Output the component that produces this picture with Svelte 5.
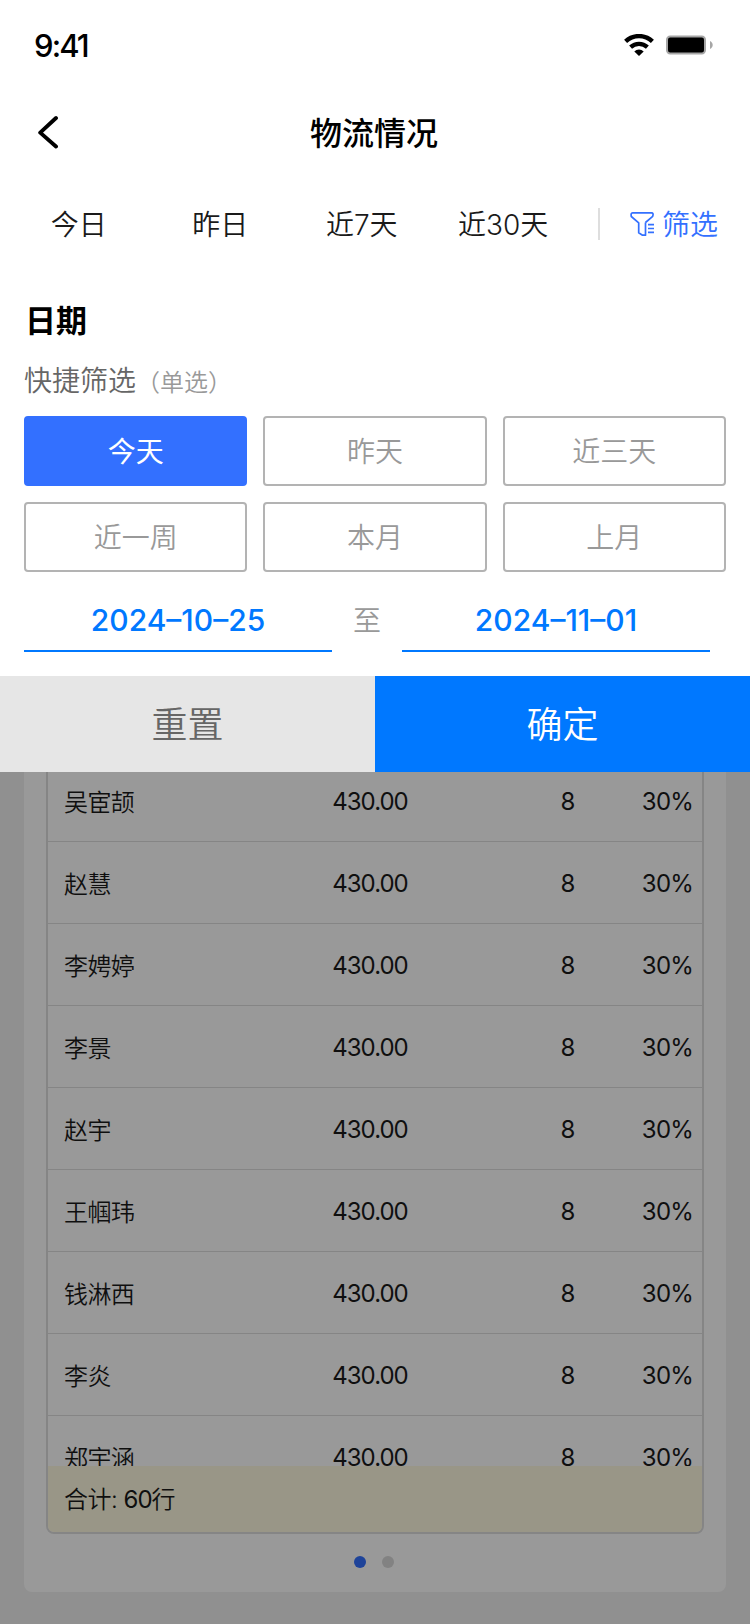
<script lang="ts">
  interface Row {
    name: string;
    amount: string;
    count: number;
    rate: string;
  }

  const tabs = ['今日', '昨日', '近7天', '近30天'];
  const ranges = ['今天', '昨天', '近三天', '近一周', '本月', '上月'];
  const names = ['吴宦颉', '赵慧', '李娉婷', '李景', '赵宇', '王帼玮', '钱淋西', '李炎', '郑宇涵'];
  const rows: Row[] = names.map((name) => ({ name, amount: '430.00', count: 8, rate: '30%' }));

  let selected = $state('今天');
  let start = $state('2024–10–25');
  let end = $state('2024–11–01');

  function reset() {
    selected = '今天';
  }
</script>

<div class="page">
  <main class="content">
    <section class="card">
      <div class="table">
        <div class="rows">
          {#each rows as row}
            <div class="row">
              <span class="name">{row.name}</span>
              <span class="amount">{row.amount}</span>
              <span class="count">{row.count}</span>
              <span class="rate">{row.rate}</span>
            </div>
          {/each}
        </div>
        <div class="total">合计: <span class="num">60</span>行</div>
      </div>
      <div class="dots">
        <i class="dot on"></i>
        <i class="dot"></i>
      </div>
    </section>
  </main>

  <div class="mask"></div>

  <div class="sheet">
    <div class="status">
      <span class="time">9:41</span>
      <span class="signals">
        <svg width="30" height="22" viewBox="0 0 30 22">
          <path d="M1.6 7.4a19.5 19.5 0 0 1 26.8 0" fill="none" stroke="#000" stroke-width="4.4" />
          <path d="M6.6 13.1a12.3 12.3 0 0 1 16.8 0" fill="none" stroke="#000" stroke-width="4.2" />
          <path d="M15 22l-4.7-4.6a6.9 6.9 0 0 1 9.4 0z" />
        </svg>
        <svg width="48" height="20" viewBox="0 0 48 20">
          <rect x="1" y="1.5" width="38" height="17" rx="3.2" fill="#000" stroke="#a6a6a6" stroke-width="2" />
          <path d="M44 6c3.6 1.4 3.6 6.6 0 8z" fill="#a6a6a6" />
        </svg>
      </span>
    </div>

    <header class="nav">
      <button class="back" aria-label="返回">
        <svg width="22" height="34" viewBox="0 0 22 34">
          <path d="M18 3L2.200 17.600l15.800 13.900" fill="none" stroke="#000" stroke-width="3.900" stroke-linecap="round" stroke-linejoin="round" />
        </svg>
      </button>
      <h1>物流情况</h1>
    </header>

    <nav class="tabs">
      {#each tabs as tab}
        <button class="tab">{tab}</button>
      {/each}
      <span class="divider"></span>
      <button class="filter">
        <svg width="24" height="26" viewBox="0 0 24 26" fill="none" stroke="#3370ff" stroke-width="1.7" stroke-linejoin="round">
          <path d="M15.5 11.5V24.200H12.500L8.700 21.800V11.800L1.300 5.500Q.6 1.800 2.500 1.800H21.500Q23.900 1.800 22.700 5.300L15.500 11.500" />
          <path d="M18 13.700h6M18 17.500h6M18 21.300h6" />
        </svg>
        <span class="filter-text">筛选</span>
      </button>
    </nav>

    <section class="panel">
      <h2>日期</h2>
      <p class="hint">快捷筛选<small>（单选）</small></p>
      <div class="ranges">
        {#each ranges as range}
          <button class="range" class:active={range === selected} onclick={() => (selected = range)}>{range}</button>
        {/each}
      </div>
      <div class="dates">
        <span class="date">{start}</span>
        <span class="to">至</span>
        <span class="date">{end}</span>
      </div>
    </section>

    <footer class="actions">
      <button class="reset" onclick={reset}>重置</button>
      <button class="confirm">确定</button>
    </footer>
  </div>
</div>

<style>
  :global(body) {
    margin: 0;
  }

  .page {
    position: relative;
    width: 750px;
    height: 1624px;
    overflow: hidden;
    background: #f0f0f0;
    color: #1a1a1a;
    font-family: Inter, 'Noto Sans CJK SC', sans-serif;
    font-weight: 350;
  }
  .page * { box-sizing: border-box; }

  button {
    padding: 0;
    border: 0;
    background: none;
    color: inherit;
    font: inherit;
    cursor: pointer;
  }
  svg { display: block; flex-shrink: 0; }
  h1, h2, p { margin: 0; }

  /* Report underneath the filter sheet */
  .content {
    height: 100%;
    padding: 270px 24px 32px;
    box-sizing: border-box;
  }
  .card {
    display: flex;
    flex-direction: column;
    height: 100%;
    padding: 0 22px 24px;
    border-radius: 8px;
    background: #fff;
  }
  .table {
    display: flex;
    flex-direction: column;
    flex: 1;
    min-height: 0;
    border: 2px solid #dedede;
    border-radius: 8px;
    overflow: hidden;
  }
  .rows {
    flex: 1;
    min-height: 0;
    padding-top: 488px;
    overflow: hidden;
  }
  .row {
    display: flex;
    align-items: center;
    height: 82px;
    padding: 0 9px 0 16px;
    border-bottom: 1px solid #dedede;
    font-size: 24px;
  }
  .name { width: 226px; padding-bottom: 1px; letter-spacing: -0.6px; }
  .amount, .count, .rate { padding-top: 2px; font-weight: 400; }
  .amount { width: 160px; text-align: center; letter-spacing: -1px; }
  .count { width: 136px; padding-left: 100px; text-align: center; }
  .rate { flex: 1; text-align: right; letter-spacing: -0.8px; }
  .total {
    height: 66px;
    padding: 1px 0 0 16px;
    background: #fffae1;
    font-size: 24px;
    line-height: 66px;
    letter-spacing: -0.5px;
  }
  .num { font-weight: 400; letter-spacing: -1px; }
  .dots {
    display: flex;
    justify-content: center;
    gap: 16px;
    padding: 22px 2px 0 0;
  }
  .dot {
    width: 12px;
    height: 12px;
    border-radius: 50%;
    background: #d9d9d9;
  }
  .dot.on { background: #3370ff; }

  .mask {
    position: absolute;
    inset: 0;
    background: rgba(0, 0, 0, 0.4);
  }

  /* Filter sheet */
  .sheet {
    position: absolute;
    top: 0;
    left: 0;
    width: 100%;
    height: 772px;
    display: flex;
    flex-direction: column;
    background: #fff;
  }
  .status {
    display: flex;
    align-items: center;
    justify-content: space-between;
    height: 88px;
    padding: 2px 36px 0 34px;
    color: #000;
  }
  .time {
    font-size: 31px;
    font-weight: 500;
    letter-spacing: -1.9px;
  }
  .signals {
    display: flex;
    align-items: center;
    gap: 12px;
  }

  .nav {
    display: flex;
    align-items: center;
    height: 88px;
    padding: 0 38px;
    color: #000;
  }
  .back { width: 22px; }
  h1 {
    flex: 1;
    padding: 0 24px 2px 0;
    font-size: 32px;
    font-weight: 500;
    text-align: center;
  }

  .tabs {
    display: flex;
    align-items: center;
    height: 96px;
    padding-left: 8px;
    font-size: 28px;
  }
  .tab { width: 141.5px; padding-bottom: 2px; }
  .divider {
    width: 2px;
    height: 32px;
    margin: 0 30px 0 24px;
    background: #dedede;
  }
  .filter {
    display: flex;
    align-items: center;
    gap: 8px;
    color: #3370ff;
  }
  .filter-text { padding-bottom: 2px; }

  .panel {
    flex: 1;
    padding: 24px 24px 0;
  }
  h2 {
    padding-left: 1px;
    color: #000;
    font-size: 31px;
    font-weight: 600;
    line-height: 50px;
  }
  .hint {
    padding-top: 3px;
    margin: 10px 0 11px;
    color: #666;
    font-size: 28px;
    line-height: 45px;
  }
  small { color: #999; font-size: 24px; }
  .ranges {
    display: grid;
    grid-template-columns: repeat(3, 1fr);
    gap: 16px;
  }
  .range {
    height: 70px;
    padding-bottom: 2px;
    border: 2px solid #b3b3b3;
    border-radius: 4px;
    color: #999;
    font-size: 28px;
  }
  .range.active {
    border-color: #3370ff;
    background: #3370ff;
    color: #fff;
    font-weight: 400;
  }
  .dates {
    display: flex;
    align-items: center;
    height: 80px;
  }
  .date {
    width: 308px;
    height: 80px;
    padding-top: 18px;
    border-bottom: 2px solid #0078ff;
    color: #0078ff;
    font-size: 30px;
    font-weight: 500;
    line-height: 60px;
    text-align: center;
  }
  .to {
    width: 70px;
    padding-top: 14px;
    color: #999;
    font-size: 28px;
    text-align: center;
  }

  .actions {
    display: flex;
    height: 96px;
    font-size: 36px;
  }
  .actions button { flex: 1; padding-bottom: 5px; }
  .reset { background: #e6e6e6; color: #666; }
  .confirm { background: #0078ff; color: #fff; }
</style>
